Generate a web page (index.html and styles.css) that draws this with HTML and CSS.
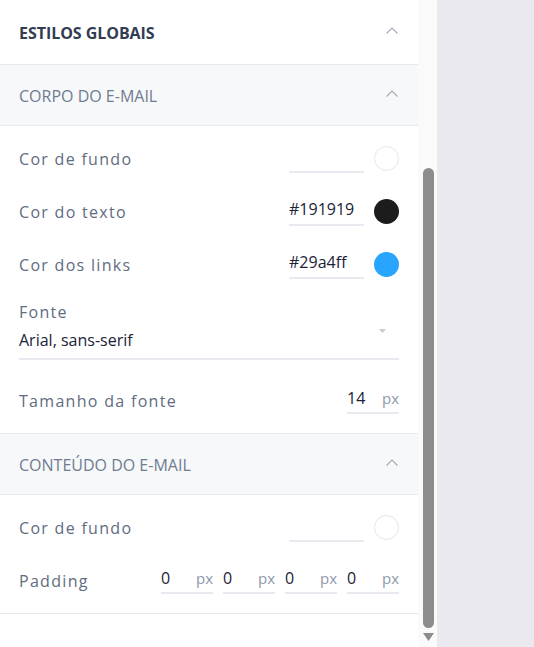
FILE: index.html
```html
<!DOCTYPE html>
<html lang="pt">
<head>
<meta charset="utf-8">
<link rel="stylesheet" href="styles.css">
</head>
<body>
<div class="layout">
  <aside class="panel">
    <div class="main-header">
      <span>ESTILOS GLOBAIS</span>
      <svg class="chev" width="12" height="7" viewBox="0 0 12 7"><path d="M0.5 6.5 L6 1 L11.5 6.5" fill="none" stroke="#a3acb9" stroke-width="1.2"/></svg>
    </div>

    <div class="sec-header">
      <span>CORPO DO E-MAIL</span>
      <svg class="chev" width="12" height="7" viewBox="0 0 12 7"><path d="M0.5 6.5 L6 1 L11.5 6.5" fill="none" stroke="#a3acb9" stroke-width="1.2"/></svg>
    </div>
    <div class="sec-body">
      <div class="row">
        <span class="label">Cor de fundo</span>
        <div class="color-field"><span class="color-input"></span><span class="swatch empty"></span></div>
      </div>
      <div class="row">
        <span class="label">Cor do texto</span>
        <div class="color-field"><span class="color-input">#191919</span><span class="swatch dark"></span></div>
      </div>
      <div class="row">
        <span class="label">Cor dos links</span>
        <div class="color-field"><span class="color-input">#29a4ff</span><span class="swatch blue"></span></div>
      </div>
      <div class="select-block">
        <span class="label">Fonte</span>
        <div class="select-value">
          <span>Arial, sans-serif</span>
          <svg class="caret" width="7" height="4" viewBox="0 0 7 4"><path d="M0 0 L7 0 L3.5 4 Z" fill="#c5cad3"/></svg>
        </div>
      </div>
      <div class="row size-row">
        <span class="label">Tamanho da fonte</span>
        <div class="num-input"><span class="num">14</span><span class="unit">px</span></div>
      </div>
    </div>

    <div class="sec-header">
      <span>CONTEÚDO DO E-MAIL</span>
      <svg class="chev" width="12" height="7" viewBox="0 0 12 7"><path d="M0.5 6.5 L6 1 L11.5 6.5" fill="none" stroke="#a3acb9" stroke-width="1.2"/></svg>
    </div>
    <div class="sec-body last">
      <div class="row">
        <span class="label">Cor de fundo</span>
        <div class="color-field"><span class="color-input"></span><span class="swatch empty"></span></div>
      </div>
      <div class="row">
        <span class="label">Padding</span>
        <div class="pad-group">
          <div class="num-input"><span class="num">0</span><span class="unit">px</span></div>
          <div class="num-input"><span class="num">0</span><span class="unit">px</span></div>
          <div class="num-input"><span class="num">0</span><span class="unit">px</span></div>
          <div class="num-input"><span class="num">0</span><span class="unit">px</span></div>
        </div>
      </div>
    </div>
  </aside>
  <div class="scrollbar">
    <div class="thumb"></div>
    <svg class="arrow" width="11" height="8" viewBox="0 0 11 8"><path d="M0 0 L11 0 L5.5 8 Z" fill="#8c8c8c"/></svg>
  </div>
  <div class="canvas"></div>
</div>
</body>
</html>
```

FILE: styles.css
```css
* { box-sizing: border-box; }
html, body { margin: 0; padding: 0; }
body {
  background: #e9e9ef;
  font-family: "Open Sans", "Noto Sans", sans-serif;
  height: 647px;
  overflow: hidden;
}
.layout {
  display: flex;
  height: 647px;
}
.panel {
  width: 418px;
  background: #ffffff;
  flex: none;
}
.scrollbar {
  width: 19px;
  background: #fafafa;
  flex: none;
  display: flex;
  flex-direction: column;
  align-items: center;
  padding-top: 168px;
}
.thumb {
  width: 11px;
  height: 460px;
  background: #8c8c8c;
  border-radius: 6px;
  margin-left: 1px;
}
.arrow {
  margin-top: 5px;
  margin-left: 1px;
}
.canvas {
  flex: 1;
  background: #e9e9ef;
}
.main-header {
  height: 65px;
  border-bottom: 1px solid #e6e8ee;
  display: flex;
  align-items: center;
  justify-content: space-between;
  padding: 2px 20px 0 19px;
  font-size: 16px;
  font-weight: 700;
  color: #333d52;
  letter-spacing: -0.05px;
}
.main-header .chev { margin-top: -6px; }
.sec-header {
  height: 61px;
  background: #f7f8f9;
  border-bottom: 1px solid #e6e8ee;
  display: flex;
  align-items: center;
  justify-content: space-between;
  padding: 1px 20px 0 19px;
  font-size: 16px;
  color: #6f7c91;
}
.sec-header .chev { margin-top: -5px; }
.sec-body {
  padding: 6px 19px 6px;
  border-bottom: 1px solid #e6e8ee;
}
.row {
  height: 53px;
  display: flex;
  align-items: center;
  justify-content: space-between;
}
.label {
  font-size: 16px;
  color: #5f6c81;
  letter-spacing: 1.3px;
}
.color-field {
  display: flex;
  align-items: center;
}
.color-input {
  width: 75px;
  height: 28px;
  border-bottom: 2px solid #e9e9ef;
  font-size: 16px;
  color: #1b2238;
  line-height: 22px;
  margin-top: 1px;
}
.swatch {
  width: 25px;
  height: 25px;
  border-radius: 50%;
  margin-left: 10px;
}
.swatch.empty { border: 1px solid #e6e6ec; background: #fff; }
.swatch.dark { background: #1c1c1c; }
.swatch.blue { background: #29a4ff; }
.select-block {
  margin-top: 11px;
  border-bottom: 2px solid #e9e9ef;
  padding-bottom: 8px;
  display: flex;
  flex-direction: column;
}
.select-block .label { line-height: 20px; }
.select-value {
  display: flex;
  align-items: center;
  justify-content: space-between;
  margin-top: 8px;
  line-height: 20px;
  font-size: 16px;
  color: #1b2238;
  padding-right: 13px;
}
.select-value .caret { margin-top: -18px; }
.size-row { margin-top: 14px; }
.num-input {
  width: 52px;
  height: 27px;
  border-bottom: 2px solid #e9e9ef;
  display: flex;
  justify-content: space-between;
  align-items: center;
  padding-bottom: 3px;
}
.num {
  font-size: 16px;
  color: #1b2238;
}
.unit {
  font-size: 15px;
  color: #8f99aa;
}
.pad-group {
  display: flex;
  gap: 10px;
}
```
